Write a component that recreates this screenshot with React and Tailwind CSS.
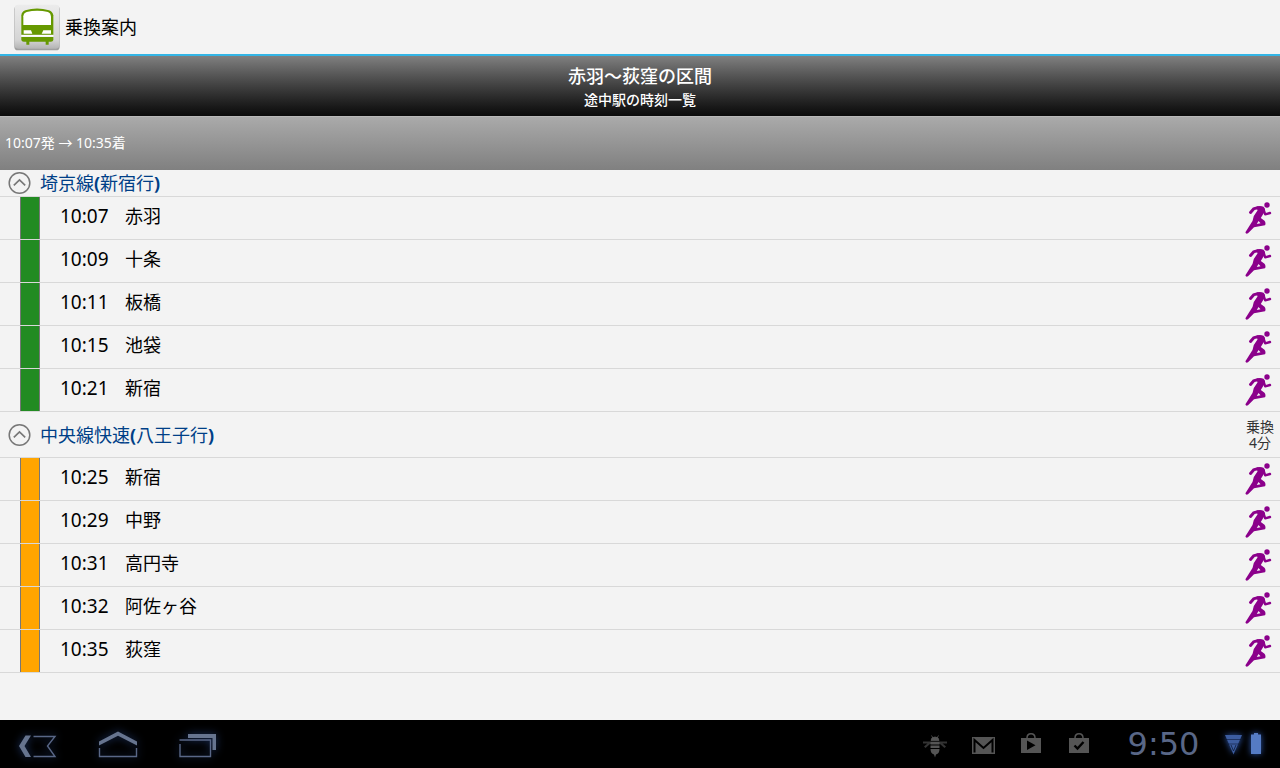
import React, { useState } from 'react';

const sections = [
  {
    line: '埼京線',
    bound: '新宿行',
    color: 'bg-[#228b22]',
    stops: [
      ['10:07', '赤羽'],
      ['10:09', '十条'],
      ['10:11', '板橋'],
      ['10:15', '池袋'],
      ['10:21', '新宿'],
    ],
  },
  {
    line: '中央線快速',
    bound: '八王子行',
    color: 'bg-[#ffa500]',
    transfer: '乗換 4分',
    stops: [
      ['10:25', '新宿'],
      ['10:29', '中野'],
      ['10:31', '高円寺'],
      ['10:32', '阿佐ヶ谷'],
      ['10:35', '荻窪'],
    ],
  },
];

function TrainLogo() {
  return (
    <svg className="w-12 h-12 shrink-0" viewBox="39 9 144 144" aria-hidden="true">
      <defs>
        <linearGradient id="tile" x1="0" y1="0" x2="0" y2="1">
          <stop offset="0" stopColor="#ececec" />
          <stop offset="0.8" stopColor="#d4d4d4" />
          <stop offset="1" stopColor="#b4b4b4" />
        </linearGradient>
      </defs>
      <rect x="43" y="17" width="136" height="134" rx="11" fill="#7a7a7a" opacity="0.7" />
      <rect x="44" y="14" width="134" height="132" rx="10" fill="url(#tile)" />
      <path d="M64 104V46Q65 35 76 31Q111 20 147 31Q158 35 160 46V104Z" fill="#669900" />
      <path d="M70 75V49Q71 39 80 36Q111 28 144 36Q152 39 153 49V75Z" fill="#fff" />
      <path d="M71 91H93L97 101H71ZM153 91H130L125 101H153Z" fill="#fff" />
      <path d="M64 105H160V110H64Z" fill="#fff" />
      <path d="M64 111H160V120Q159 125 153 125H146V134H137V125H88V134H79V125H71Q65 125 64 120Z" fill="#669900" />
    </svg>
  );
}

function Runner() {
  return (
    <svg className="w-7 h-8" viewBox="0 0 28 32" fill="#8b008b" aria-hidden="true">
      <circle cx="22" cy="3" r="2.7" />
      <path d="M5.5 10.5L9 6.6L13 5.8" fill="none" stroke="#8b008b" strokeWidth="3" strokeLinecap="round" strokeLinejoin="round" />
      <path d="M18.5 7.5L20.2 12.3L25 11" fill="none" stroke="#8b008b" strokeWidth="2.4" strokeLinecap="round" strokeLinejoin="round" />
      <path
        d="M11.5 4.4Q16 3.5 18.5 4.8Q20.5 6.5 20 9L15.8 16L19.5 18.8Q21.2 21 20 23.3L9 25.3L3 31.3Q0.8 32.3 0.4 30.3L7.5 19L8.8 14L12.5 8.5ZM13.5 19L11.8 22L15.5 21.3Z"
        fillRule="evenodd"
      />
    </svg>
  );
}

function StopRow({ time, name, color }) {
  return (
    <li className="flex h-[43px] border-b border-[#d8d8d8] pl-5">
      <span className={`w-5 border-x border-[#777] ${color}`}></span>
      <span className="w-[85px] pl-5 pb-1 self-center text-[19px] leading-6">{time}</span>
      <span className="flex-1 pb-1 self-center text-lg leading-6">{name}</span>
      <button type="button" aria-label={name} className="pr-[7px]">
        <Runner />
      </button>
    </li>
  );
}

function Section({ section }) {
  const [open, setOpen] = useState(true);
  return (
    <section>
      <h2 className="border-b border-[#d8d8d8]">
        <button type="button" aria-expanded={open} onClick={() => setOpen(!open)} className={`w-full flex items-center pl-2 pr-[6px] text-left ${section.transfer ? 'h-[45px]' : 'h-[26px]'}`}>
          <svg className={`w-6 h-6 mr-2 ${open ? '' : 'rotate-180'}`} viewBox="0 0 24 24" fill="none" stroke="#777" aria-hidden="true">
            <circle cx="11.5" cy="12" r="10.3" strokeWidth="1.5" />
            <path d="M5.8 14.3L11.5 9L17.2 14.3" strokeWidth="1.7" />
          </svg>
          <span className="flex-1 text-lg leading-6 text-[#003f87]">
            {section.line}
            <span className="font-bold">(</span>
            {section.bound}
            <span className="font-bold">)</span>
          </span>
          {section.transfer && (
            <span className="w-7 text-sm leading-4 text-center text-[#333]">{section.transfer}</span>
          )}
        </button>
      </h2>
      {open && (
        <ul>
          {section.stops.map(([time, name]) => (
            <StopRow key={time} time={time} name={name} color={section.color} />
          ))}
        </ul>
      )}
    </section>
  );
}

function NavButton({ label, children }) {
  return (
    <button type="button" aria-label={label}>
      <svg className="w-20 h-12 drop-shadow-[0_0_4px_#1d3566]" viewBox="0 0 80 48" fill="none" stroke="#596787" strokeWidth="1.4" aria-hidden="true">
        {children}
      </svg>
    </button>
  );
}

function TrayIcon({ children }) {
  return (
    <svg className="w-12 h-12" viewBox="0 0 48 48" fill="#555" aria-hidden="true">
      {children}
    </svg>
  );
}

function SystemBar() {
  return (
    <footer className="flex items-center justify-between h-12 bg-black">
      <nav className="flex">
        <NavButton label="戻る">
          <path d="M19 26L25.5 15.5H31L24.5 26L31 37H25.5Z" fill="#66748f" stroke="none" />
          <path d="M33.5 16.5H55L47.5 26L55 36.5H33.5" />
        </NavButton>
        <NavButton label="ホーム">
          <path d="M19 21.5L38 11.5L57 21.5V25.5L38 15.8L19 25.5Z" fill="#66748f" stroke="none" />
          <path d="M19.5 28V36.5H56.5V28" />
        </NavButton>
        <NavButton label="履歴">
          <path d="M28 14H56V30H52.5V18H28Z" fill="#66748f" stroke="none" />
          <path d="M19.5 20H50.5V36.5H20V24" />
        </NavButton>
      </nav>
      <div className="flex items-center pr-4">
        <TrayIcon>
          <path d="M20 20.5Q20 17 24 17T28 20.5ZM20.5 15.5L22 18M27.5 15.5L26 18" stroke="#555" strokeWidth="0.8" />
          <path d="M12 21.5H36V23.5H31.5L35 26.5L33.5 28L29 24H19L14.5 28L13 26.5L16.5 23.5H12Z" opacity="0.6" />
          <path d="M19.5 22H28.5V24.5H19.5ZM19.5 25.5H28.5V28H19.5ZM19.5 29H28.5Q28.5 33.5 25 34.5L24 37.5L23 34.5Q19.5 33.5 19.5 29Z" />
        </TrayIcon>
        <TrayIcon>
          <path d="M13 17H36V34H13Z" />
          <path d="M15.5 32.5V20L24.5 28L33.5 20V32.5" fill="none" stroke="#000" strokeWidth="2" />
        </TrayIcon>
        <TrayIcon>
          <path d="M14 18H34V33H14Z" />
          <path d="M20 18Q20 13.7 24 13.7T28 18" fill="none" stroke="#555" strokeWidth="1.5" />
          <path d="M20 20.5V30L28.5 25.2Z" fill="#000" />
        </TrayIcon>
        <TrayIcon>
          <path d="M14 18H34V33H14Z" />
          <path d="M20 18Q20 13.7 24 13.7T28 18" fill="none" stroke="#555" strokeWidth="1.5" />
          <path d="M19.5 25.5L22.5 28.5L28.5 22" fill="none" stroke="#000" strokeWidth="2.4" />
        </TrayIcon>
        <time className="w-[121px] text-center font-['DejaVu_Sans'] text-[32px] leading-8 text-[#596787]">9:50</time>
        <svg className="w-10 h-12 drop-shadow-[0_0_3px_#2c55a8]" viewBox="0 0 40 48" aria-hidden="true">
          <path d="M1 15H18L9.5 34.5Z" fill="#3c5c9f" />
          <path d="M2 19.5H17M4 24H15" stroke="#0b1a3a" strokeWidth="0.6" />
          <path d="M7 25L9.5 31L12 25" fill="none" stroke="#0b1a3a" strokeWidth="0.8" />
          <path d="M27 14.5H30V13H34V14.5H37V34H27Z" fill="#557bc4" />
        </svg>
      </div>
    </footer>
  );
}

export default function App() {
  return (
    <div className="min-h-screen flex flex-col bg-[#f3f3f3] text-black font-['Noto_Sans','Noto_Sans_CJK_JP',sans-serif]">
      <header className="flex items-center h-14 pl-[13px] gap-1 border-b-2 border-[#33b5e5]">
        <TrainLogo />
        <h1 className="text-lg leading-6">乗換案内</h1>
      </header>
      <div className="h-[60px] pt-2 text-center text-white bg-linear-to-b from-[#808080] to-[#0a0a0a]">
        <p className="text-lg leading-6 font-medium">赤羽～荻窪の区間</p>
        <p className="text-sm leading-6 font-medium">途中駅の時刻一覧</p>
      </div>
      <div className="flex items-center h-[54px] px-[5px] pb-[2px] text-sm text-white bg-linear-to-b from-[#aaa] to-[#808080] border-t border-[#b8b8b8]">
        10:07発 → 10:35着
      </div>
      <main className="flex-1">
        {sections.map((s) => (
          <Section key={s.line} section={s} />
        ))}
      </main>
      <SystemBar />
    </div>
  );
}
